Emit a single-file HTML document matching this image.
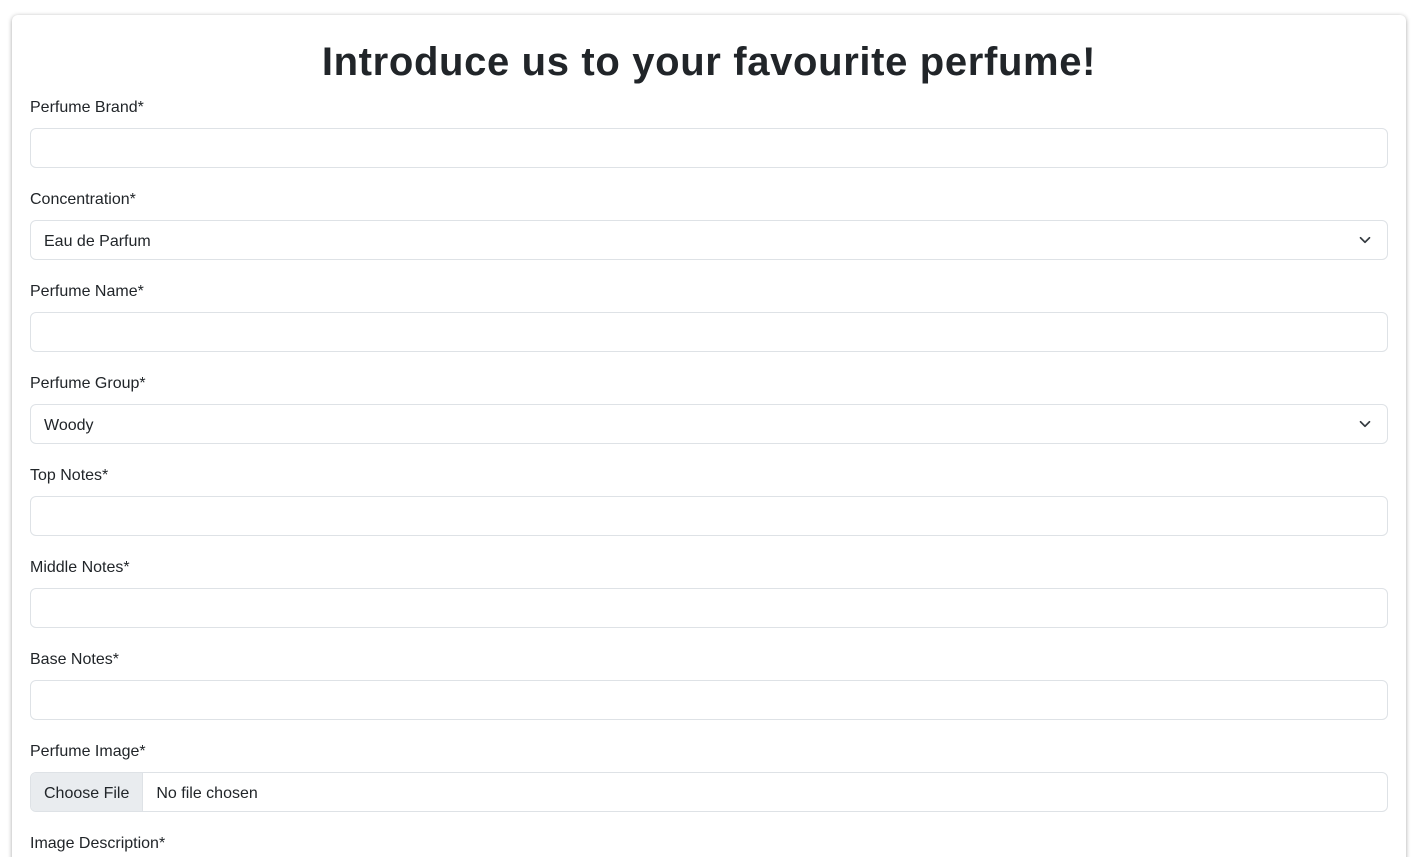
<!DOCTYPE html>
<html style="height:857px;overflow:hidden"><head><meta charset="utf-8"><style>
body{margin:0;background:#fff;font-family:"Liberation Sans",sans-serif;color:#212529;width:1421px;height:857px;overflow:hidden;position:relative}
.card{position:absolute;left:12px;top:15px;width:1394px;height:860px;border-radius:6px;box-shadow:0 1px 5px rgba(0,0,0,.35);background:#fff}
h1{position:absolute;left:0;right:0;top:37px;margin:0;text-align:center;font-size:40px;font-weight:bold;line-height:50px;color:#212529;letter-spacing:0.65px;padding-right:3px}
.l{position:absolute;left:30px;font-size:16px;line-height:24px}
.i{position:absolute;left:30px;width:1356px;height:38px;border:1px solid #dee2e6;border-radius:6px;background:#fff;font-size:16px;line-height:42px;box-sizing:content-box}
.i span{margin-left:13px}
.i svg{position:absolute;right:16px;top:13px}
.f{overflow:hidden}
.f b{font-weight:normal;display:inline-block;background:#e9ecef;border-right:1px solid #dee2e6;padding:0 13px;height:38px;vertical-align:top}
</style></head><body>
<div class="card"></div>
<h1>Introduce us to your favourite perfume!</h1>
<div class="l" style="top:96px">Perfume Brand*</div><div class="i" style="top:128px"></div>
<div class="l" style="top:188px">Concentration*</div><div class="i" style="top:220px"><span>Eau de Parfum</span><svg width="12" height="12" viewBox="0 0 16 16"><path d="M2 5l6 6 6-6" fill="none" stroke="#343a40" stroke-width="2.2" stroke-linecap="round" stroke-linejoin="round"/></svg></div>
<div class="l" style="top:280px">Perfume Name*</div><div class="i" style="top:312px"></div>
<div class="l" style="top:372px">Perfume Group*</div><div class="i" style="top:404px"><span>Woody</span><svg width="12" height="12" viewBox="0 0 16 16"><path d="M2 5l6 6 6-6" fill="none" stroke="#343a40" stroke-width="2.2" stroke-linecap="round" stroke-linejoin="round"/></svg></div>
<div class="l" style="top:464px">Top Notes*</div><div class="i" style="top:496px"></div>
<div class="l" style="top:556px">Middle Notes*</div><div class="i" style="top:588px"></div>
<div class="l" style="top:648px">Base Notes*</div><div class="i" style="top:680px"></div>
<div class="l" style="top:740px">Perfume Image*</div><div class="i f" style="top:772px"><b>Choose File</b><span>No file chosen</span></div>
<div class="l" style="top:832px">Image Description*</div>
</body></html>
